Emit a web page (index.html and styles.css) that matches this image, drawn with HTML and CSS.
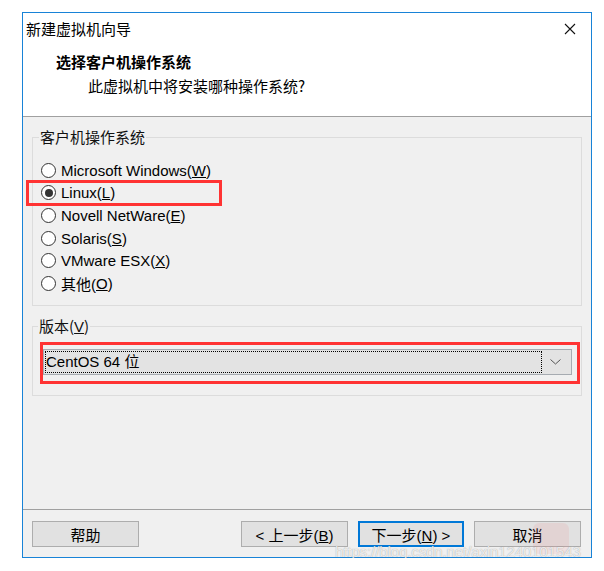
FILE: index.html
```html
<!DOCTYPE html>
<html>
<head>
    <title>新建虚拟机向导</title>
    <link rel="stylesheet" href="styles.css">
</head>
<body>
    <div class="window">
        <div class="header">
            <div class="titlebar">
                <span class="title">新建虚拟机向导</span>
                <svg class="close" width="12" height="12" viewBox="0 0 12 12">
                    <path d="M1 1L11 11M11 1L1 11" stroke="#111" stroke-width="1.1" fill="none"/>
                </svg>
            </div>
            <div class="heading">选择客户机操作系统</div>
            <div class="subheading">此虚拟机中将安装哪种操作系统?</div>
        </div>

        <div class="content">
            <fieldset class="group">
                <legend>客户机操作系统</legend>
                <div class="radio"><span class="dot"></span>Microsoft Windows(<u>W</u>)</div>
                <div class="radio checked marked"><span class="dot"></span>Linux(<u>L</u>)</div>
                <div class="radio"><span class="dot"></span>Novell NetWare(<u>E</u>)</div>
                <div class="radio"><span class="dot"></span>Solaris(<u>S</u>)</div>
                <div class="radio"><span class="dot"></span>VMware ESX(<u>X</u>)</div>
                <div class="radio"><span class="dot"></span>其他(<u>O</u>)</div>
            </fieldset>

            <fieldset class="group version">
                <legend>版本(<u>V</u>)</legend>
                <div class="mark">
                    <div class="combo">
                        <span class="combo-text">CentOS 64 位</span>
                        <svg class="chevron" width="11" height="6" viewBox="0 0 11 6">
                            <path d="M0.5 0.5L5.5 5L10.5 0.5" stroke="#555" stroke-width="1" fill="none"/>
                        </svg>
                    </div>
                </div>
            </fieldset>
        </div>

        <div class="footer">
            <button class="btn">帮助</button>
            <div class="spacer"></div>
            <button class="btn">&lt; 上一步(<u>B</u>)</button>
            <button class="btn primary">下一步(<u>N</u>) &gt;</button>
            <button class="btn">取消</button>
        </div>

        <span class="wm-logo"></span>
        <span class="watermark">https://blog.csdn.net/axin1240101543</span>
    </div>
</body>
</html>
```

FILE: styles.css
```css
body { margin: 0; background: #fff; font-family: "Liberation Sans", "Noto Sans CJK SC", sans-serif; font-size: 15px; color: #000; }
.window { position: relative; margin: 12px 0 0 22px; width: 570px; height: 546px; box-sizing: border-box; border: 1px solid #1883d7; display: flex; flex-direction: column; background: #f0f0f0; }

.header { background: #fff; height: 104px; box-sizing: border-box; border-bottom: 1px solid #a0a0a0; }
.titlebar { display: flex; justify-content: space-between; align-items: center; margin-top: 6px; padding: 0 15px 0 3px; line-height: 20px; }
.title { font-family: "Noto Sans CJK SC", sans-serif; }
.heading { margin: 13px 0 0 33px; font-weight: bold; line-height: 20px; font-family: "Noto Sans CJK SC", sans-serif; }
.subheading { margin: 4px 0 0 65px; line-height: 20px; font-family: "Noto Sans CJK SC", sans-serif; }

.content { flex: 1; padding: 10px 9px 0 9px; }
.group { margin: 0; border: 1px solid #dcdcdc; padding: 12px 8px 10px 8px; min-width: 0; }
.group legend { padding: 0 1px; margin-left: -2px; line-height: 20px; font-family: "Noto Sans CJK SC", sans-serif; color: #111; }
.group legend u { font-family: "Liberation Sans", sans-serif; }

.radio { position: relative; display: flex; align-items: center; height: 22.6px; }
.dot { width: 15px; height: 15px; box-sizing: border-box; border: 1px solid #333; border-radius: 50%; background: #fff; margin-right: 5px; display: flex; align-items: center; justify-content: center; }
.checked .dot::after { content: ""; width: 8px; height: 8px; border-radius: 50%; background: #333; }
.marked::after { content: ""; position: absolute; left: -15px; top: -2px; width: 196px; height: 26px; box-sizing: border-box; border: 3px solid #f33; }

.version { margin-top: 10px; padding: 5px 1px 11px 7px; }
.mark { border: 3px solid #f33; padding: 4px 5px 6px 0; }
.combo { display: flex; align-items: center; height: 26px; box-sizing: border-box; border: 1px solid #a6abb1; background: #e3e3e3; padding: 2px 10px 2px 1px; }
.combo-text { flex: 1; height: 20px; line-height: 20px; border: 1px dotted #000; }
.chevron { margin-left: 8px; }

.footer { height: 48px; box-sizing: border-box; border-top: 1px solid #a0a0a0; display: flex; align-items: flex-start; padding: 11px 10px 0 9px; gap: 10px; }
.spacer { flex: 1; }
.btn { width: 107px; height: 26px; box-sizing: border-box; border: 1px solid #adadad; background: #e1e1e1; font-family: "Liberation Sans", "Noto Sans CJK SC", sans-serif; font-size: 15px; color: #000; padding: 0; }
.btn.primary { border: 2px solid #0078d7; width: 106px; }

.wm-logo { position: absolute; right: 22px; bottom: 3px; width: 36px; height: 31px; border-radius: 6px; background: rgba(240, 120, 120, 0.13); }
.watermark { position: absolute; left: 312px; top: 533px; line-height: 12px; font-family: "Liberation Sans", sans-serif; font-size: 15px; color: rgba(255, 255, 255, 0.8); text-shadow: 0 0 1px rgba(110, 110, 110, 0.7); letter-spacing: -0.1px; white-space: nowrap; }
```
